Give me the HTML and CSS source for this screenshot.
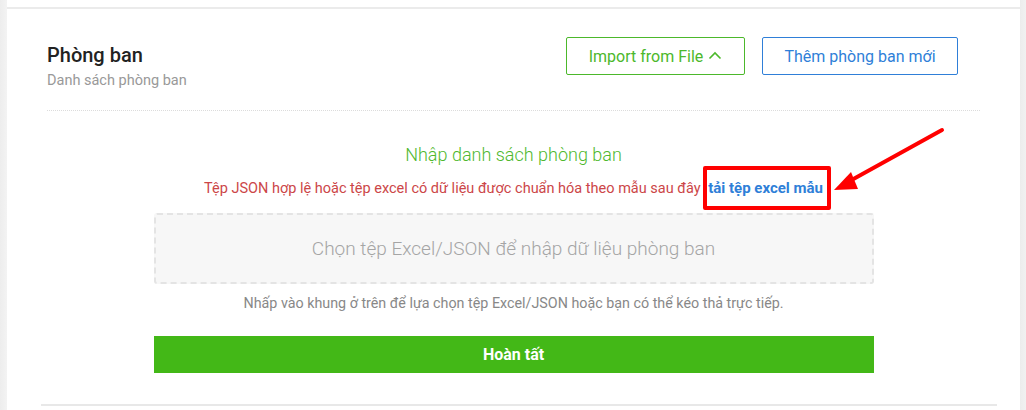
FILE: index.html
```html
<!DOCTYPE html>
<html lang="vi">
<head>
<meta charset="utf-8">
<title>Phòng ban</title>
<link rel="stylesheet" href="styles.css">
</head>
<body>
<div class="page">
  <div class="side-left"></div>
  <main class="main">
    <div class="card">
      <div class="card-header">
        <div class="title-block">
          <h1 class="title">Phòng ban</h1>
          <div class="subtitle">Danh sách phòng ban</div>
        </div>
        <div class="actions">
          <button class="btn btn-green">Import from File
            <svg class="chev" width="14" height="9" viewBox="0 0 14 9"><polyline points="1.5,7.5 7,2 12.5,7.5" fill="none" stroke="currentColor" stroke-width="1.6"/></svg>
          </button>
          <button class="btn btn-blue">Thêm phòng ban mới</button>
        </div>
      </div>
      <section class="import">
        <h2 class="import-title">Nhập danh sách phòng ban</h2>
        <p class="import-note">Tệp JSON hợp lệ hoặc tệp excel có dữ liệu được chuẩn hóa theo mẫu sau đây <a class="sample-link" href="#">tải tệp excel mẫu</a></p>
        <div class="dropzone">Chọn tệp Excel/JSON để nhập dữ liệu phòng ban</div>
        <p class="hint">Nhấp vào khung ở trên để lựa chọn tệp Excel/JSON hoặc bạn có thể kéo thả trực tiếp.</p>
        <button class="btn-done">Hoàn tất</button>
      </section>
      <div class="bottom-line"></div>
    </div>
  </main>
  <div class="side-right"></div>
</div>
<div class="annot-box"></div>
<svg class="annot-arrow" width="1026" height="410" viewBox="0 0 1026 410">
  <line x1="942" y1="130" x2="848" y2="182" stroke="#ff0000" stroke-width="4" stroke-linecap="round"/>
  <polygon points="834,190 851,172 858,189" fill="#ff0000"/>
</svg>
</body>
</html>
```
FILE: styles.css
```css
* { box-sizing: border-box; }
html, body { margin: 0; padding: 0; }
body {
  font-family: Roboto, "Noto Sans", Arial, sans-serif;
  background: #ffffff;
  width: 1026px;
  height: 410px;
  overflow: hidden;
  position: relative;
}
.page {
  display: flex;
  height: 410px;
}
.side-left {
  width: 7px;
  background: linear-gradient(to right, #ededed, #f3f3f3);
}
.side-right {
  width: 6px;
  background: linear-gradient(to right, #ececec, #f1f1f1);
}
.main {
  flex: 1;
  padding-top: 7px;
  background: #fff;
}
.card {
  border-top: 2px solid #ebebeb;
  padding: 0 40px;
}
.card-header {
  display: flex;
  justify-content: space-between;
  align-items: flex-start;
  padding: 28px 22px 19px 0;
  border-bottom: 1px dotted #dcdcdc;
}
.title-block { margin-top: 6px; }
.title {
  margin: 0;
  font-size: 20px;
  line-height: 24px;
  font-weight: 500;
  color: #222;
}
.subtitle {
  margin-top: 4px;
  font-size: 14.5px;
  line-height: 20px;
  color: #999;
}
.actions {
  display: flex;
  gap: 17px;
}
.btn {
  height: 38px;
  background: #fff;
  border: 1px solid;
  border-radius: 2px;
  font-family: inherit;
  font-size: 16px;
  padding: 0;
  display: flex;
  align-items: center;
  gap: 5px;
}
.btn-green {
  color: #4cb82b;
  border-color: #4cb82b;
  width: 179px;
  justify-content: center;
}
.btn-blue {
  color: #2f7fd8;
  border-color: #2f7fd8;
  width: 196px;
  justify-content: center;
}
.chev { margin-top: -1px; }
.import {
  width: 720px;
  margin: 0 auto;
  padding-top: 32px;
  text-align: center;
}
.import-title {
  margin: 0;
  font-size: 18px;
  line-height: 24px;
  font-weight: 300;
  color: #4fb82e;
}
.import-note {
  margin: 11px 0 0;
  font-size: 14.5px;
  line-height: 20px;
  color: #cc4648;
  white-space: nowrap;
}
.sample-link {
  margin-left: 4px;
  color: #2f7fd8;
  font-size: 15px;
  font-weight: 700;
  text-decoration: none;
}
.dropzone {
  margin-top: 14px;
  height: 71px;
  background: #f7f7f7;
  border: 2px dashed #e4e4e4;
  border-radius: 3px;
  display: flex;
  align-items: center;
  justify-content: center;
  font-size: 19px;
  font-weight: 300;
  color: #a5a5a5;
}
.hint {
  margin: 10px 0 0;
  font-size: 14.3px;
  line-height: 18px;
  color: #888;
}
.btn-done {
  margin-top: 24px;
  width: 100%;
  height: 37px;
  border: none;
  background: #43b817;
  color: #fff;
  font-family: inherit;
  font-size: 16px;
  font-weight: 700;
}
.bottom-line {
  margin: 31px -17px 0 -6px;
  border-top: 2px solid #e8e8e8;
}
.annot-box {
  position: absolute;
  left: 703px;
  top: 166px;
  width: 128px;
  height: 44px;
  border: 4.5px solid #ff0000;
  border-radius: 2px;
}
.annot-arrow {
  position: absolute;
  left: 0;
  top: 0;
  pointer-events: none;
}
```
